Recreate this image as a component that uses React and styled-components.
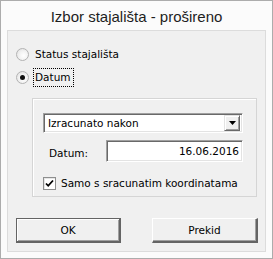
import React, { useState } from 'react'
import styled, { createGlobalStyle } from 'styled-components'

const Global = createGlobalStyle`
  html, body { margin: 0; padding: 0; background: #fbfbfb; }
  * { box-sizing: border-box; }
`;

const Window = styled.div`
  width: 273px;
  height: 259px;
  border: 1px solid #acacac;
  background: #fbfbfb;
  display: flex;
  flex-direction: column;
  font-family: "DejaVu Sans", Verdana, sans-serif;
  font-size: 10.5px;
  color: #000;
`;

const Title = styled.div`
  height: 29px;
  display: flex;
  align-items: center;
  justify-content: center;
  font-family: "Liberation Sans", Arial, sans-serif;
  font-size: 15px;
  color: #1e1e1e;
  padding-top: 1px;
`;

const Client = styled.div`
  margin: 0 6px 0 6px;
  height: 222px;
  border: 1px solid #dcdcdc;
  background: #f0f0f0;
  padding: 14px 7px 0 8px;
  display: flex;
  flex-direction: column;
`;

const RadioRow = styled.label`
  height: 18px;
  display: flex;
  align-items: center;
  gap: 4px;
  margin-bottom: 5px;
`;

const RadioDot = styled.span`
  width: 13px;
  height: 13px;
  border-radius: 50%;
  border: 1px solid #b3b3b3;
  background: radial-gradient(circle at 60% 60%, #ffffff 0%, #f3f3f3 45%, #dcdcdc 100%);
  display: flex;
  align-items: center;
  justify-content: center;
  &::after {
    content: '';
    width: 5px;
    height: 5px;
    border-radius: 50%;
    background: ${p => (p.$on ? '#101010' : 'transparent')};
  }
`;

const RadioText = styled.span`
  padding: 1px 2px 1px 1px;
  line-height: 15px;
  border: 1px dotted ${p => (p.$focus ? '#000' : 'transparent')};
`;

const Group = styled.div`
  margin: 7px 0 0 16px;
  width: 225px;
  height: 99px;
  border: 1px solid #d5d5d5;
  box-shadow: inset 1px 1px 0 #fff;
  padding: 14px 0 0 10px;
  display: flex;
  flex-direction: column;
`;

const Sunken = styled.div`
  background: #fff;
  border-top: 1px solid #a0a0a0;
  border-left: 1px solid #a0a0a0;
  border-bottom: 1px solid #fff;
  border-right: 1px solid #fff;
  box-shadow: inset 1px 1px 0 #696969, inset -1px -1px 0 #e3e3e3;
`;

const Combo = styled(Sunken)`
  width: 200px;
  height: 20px;
  display: flex;
  align-items: center;
  padding: 0 2px 0 4px;
`;

const ComboText = styled.span`
  flex: 1;
`;

const DropButton = styled.span`
  width: 16px;
  height: 16px;
  background: #f0f0f0;
  border-top: 1px solid #e3e3e3;
  border-left: 1px solid #e3e3e3;
  border-bottom: 1px solid #696969;
  border-right: 1px solid #696969;
  box-shadow: inset 1px 1px 0 #fff, inset -1px -1px 0 #a0a0a0;
  display: flex;
  align-items: center;
  justify-content: center;
`;

const FieldRow = styled.div`
  display: flex;
  align-items: center;
  margin-top: 7px;
  height: 22px;
`;

const FieldLabel = styled.span`
  width: 63px;
  padding: 3px 0 0 6px;
`;

const DateBox = styled(Sunken)`
  width: 137px;
  height: 22px;
  display: flex;
  align-items: center;
  justify-content: flex-end;
  padding-right: 3px;
`;

const CheckRow = styled.label`
  display: flex;
  align-items: center;
  gap: 5px;
  margin-top: 10px;
  height: 22px;
`;

const CheckBox = styled.span`
  width: 13px;
  height: 13px;
  border: 1px solid #8e8f8f;
  background: #fff;
  box-shadow: inset 1px 1px 0 #e6e6e6;
  display: flex;
  align-items: center;
  justify-content: center;
`;

const ButtonRow = styled.div`
  display: flex;
  justify-content: space-between;
  margin-top: 21px;
`;

const Button = styled.button`
  width: ${p => p.$w}px;
  height: 25px;
  font: inherit;
  color: #000;
  background: #f0f0f0;
  padding: 0;
  border-top: 1px solid ${p => (p.$default ? '#646464' : '#fff')};
  border-left: 1px solid ${p => (p.$default ? '#646464' : '#fff')};
  border-bottom: 2px solid #646464;
  border-right: 2px solid #646464;
  box-shadow: ${p => (p.$default ? 'inset 1px 1px 0 #fff, inset -1px -1px 0 #a0a0a0' : 'inset -1px -1px 0 #a0a0a0')};
`;

export default function App() {
  const [mode] = useState('datum');
  return (
    <>
      <Global />
      <Window>
        <Title>Izbor stajališta - prošireno</Title>
        <Client>
          <RadioRow>
            <RadioDot $on={mode === 'status'} />
            <RadioText>Status stajališta</RadioText>
          </RadioRow>
          <RadioRow>
            <RadioDot $on={mode === 'datum'} />
            <RadioText $focus>Datum</RadioText>
          </RadioRow>
          <Group>
            <Combo>
              <ComboText>Izracunato nakon</ComboText>
              <DropButton>
                <svg width="7" height="4" viewBox="0 0 7 4">
                  <path d="M0 0h7L3.5 4z" fill="#000" />
                </svg>
              </DropButton>
            </Combo>
            <FieldRow>
              <FieldLabel>Datum:</FieldLabel>
              <DateBox>16.06.2016</DateBox>
            </FieldRow>
            <CheckRow>
              <CheckBox>
                <svg width="9" height="9" viewBox="0 0 9 9">
                  <path d="M1 4.5l2.2 2.3L8 1.5" stroke="#000" strokeWidth="1.8" fill="none" />
                </svg>
              </CheckBox>
              <span>Samo s sracunatim koordinatama</span>
            </CheckRow>
          </Group>
          <ButtonRow>
            <Button $w={105} $default>OK</Button>
            <Button $w={106}>Prekid</Button>
          </ButtonRow>
        </Client>
      </Window>
    </>
  );
}
